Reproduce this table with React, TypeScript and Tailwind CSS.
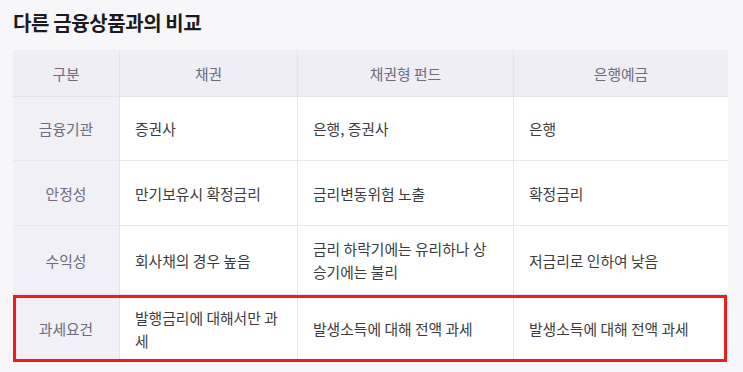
import React from "react";

const cols = "grid grid-cols-[107px_178px_216px_214px]";

const rows = [
  { label: "금융기관", cells: ["증권사", "은행, 증권사", "은행"], h: "h-[64px]" },
  { label: "안정성", cells: ["만기보유시 확정금리", "금리변동위험 노출", "확정금리"], h: "h-[65px]" },
  { label: "수익성", cells: ["회사채의 경우 높음", "금리 하락기에는 유리하나 상승기에는 불리", "저금리로 인하여 낮음"], h: "h-[69px]" },
];

const last = {
  label: "과세요건",
  cells: ["발행금리에 대해서만 과세", "발생소득에 대해 전액 과세", "발생소득에 대해 전액 과세"],
};

export default function App() {
  return (
    <div className="min-h-screen bg-[#f7f7fa] px-[13px] pt-[9px] font-['Noto_Sans_CJK_KR','Noto_Sans',sans-serif]">
      <h2 className="text-[20px] leading-[28px] font-bold text-[#1b1b1f] tracking-[-0.4px]">다른 금융상품과의 비교</h2>

      <div className="mt-[13px] w-[715px] text-[14.8px] leading-[23px]">
        {/* Header */}
        <div className={`${cols} h-[47px] bg-[#eeeef4] border-b border-[#e2e2ec] text-[#6c6c7e]`}>
          {["구분", "채권", "채권형 펀드", "은행예금"].map((t, i) => (
            <div key={i} className={`flex items-center justify-center ${i < 3 ? "border-r border-[#e2e2ec]" : ""}`}>
              {t}
            </div>
          ))}
        </div>

        {rows.map((r) => (
          <div key={r.label} className={`${cols} ${r.h} border-b border-[#e6e6ef] bg-white`}>
            <div className="flex items-center justify-center bg-[#f0f0f6] border-r border-[#e2e2ec] text-[#6c6c7e]">
              {r.label}
            </div>
            {r.cells.map((c, i) => (
              <div key={i} className={`flex items-center pl-[15px] pr-[16px] text-[#3c3c40] ${i < 2 ? "border-r border-[#e6e6ef]" : ""}`}>
                {c}
              </div>
            ))}
          </div>
        ))}

        {/* Highlighted row */}
        <div className={`${cols} h-[67px] bg-white outline-[3px] outline-solid outline-[#f01c1c] outline-offset-[-3px] mr-[1px]`}>
          <div className="flex items-center justify-center bg-[#f0f0f6] border-r border-[#e2e2ec] text-[#6c6c7e]">
            {last.label}
          </div>
          {last.cells.map((c, i) => (
            <div key={i} className={`flex items-center pl-[15px] pr-[16px] text-[#3c3c40] ${i < 2 ? "border-r border-[#e6e6ef]" : ""}`}>
              {c}
            </div>
          ))}
        </div>
      </div>
    </div>
  );
}
